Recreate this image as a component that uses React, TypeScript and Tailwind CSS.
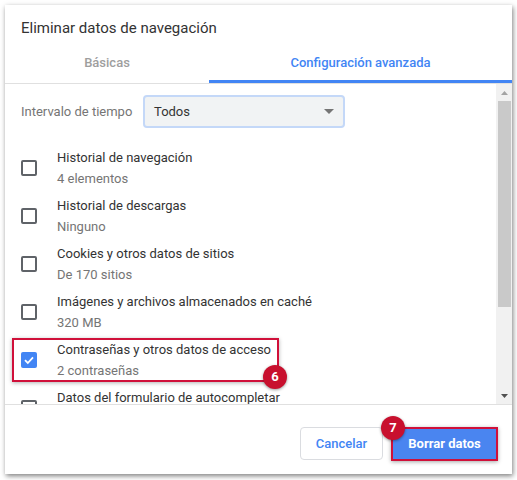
import React from "react";

const items = [
  { t: "Historial de navegación", s: "4 elementos", c: false },
  { t: "Historial de descargas", s: "Ninguno", c: false },
  { t: "Cookies y otros datos de sitios", s: "De 170 sitios", c: false },
  { t: "Imágenes y archivos almacenados en caché", s: "320 MB", c: false },
  { t: "Contraseñas y otros datos de acceso", s: "2 contraseñas", c: true },
  { t: "Datos del formulario de autocompletar", s: "", c: false },
];

function Box({ checked }: { checked: boolean }) {
  if (checked)
    return (
      <div className="w-4 h-4 rounded-[2px] bg-[#4285f4] flex items-center justify-center shrink-0">
        <svg width="12" height="12" viewBox="0 0 12 12">
          <path d="M2 6.2 L4.8 9 L10 3.4" stroke="white" strokeWidth="1.8" fill="none" />
        </svg>
      </div>
    );
  return <div className="w-4 h-4 rounded-[2px] border-2 border-[#5f6368] shrink-0" />;
}

function Badge({ n }: { n: string }) {
  return (
    <div className="w-[24px] h-[24px] rounded-full bg-[#c8102e] text-white text-[13px] font-bold flex items-center justify-center shadow-[0_1px_3px_rgba(0,0,0,0.4)]">
      {n}
    </div>
  );
}

export default function App() {
  return (
    <div className="w-[517px] h-[480px] bg-white pt-[5px] pl-[5px]" style={{ fontFamily: "Roboto, 'Liberation Sans', sans-serif" }}>
      <div className="w-[507px] h-[469px] bg-white shadow-[1px_2px_5px_rgba(0,0,0,0.5)] flex flex-col">
        <div className="h-[40px] shrink-0 pl-[16px] pt-[13px] text-[15px] text-[#333] leading-[20px]">Eliminar datos de navegación</div>
        <div className="flex h-[39px] shrink-0 border-b border-[#e0e0e0]">
          <div className="w-[204px] flex items-center justify-center text-[13px] font-medium text-[#9e9e9e] pb-[2px]">Básicas</div>
          <div className="flex-1 flex items-center justify-center text-[13px] font-medium text-[#4285f4] border-b-[3px] border-[#4285f4] pt-[1px]">Configuración avanzada</div>
        </div>
        <div className="h-[321px] shrink-0 flex border-b border-[#e0e0e0] overflow-hidden">
          <div className="flex-1 flex flex-col pt-[11px] overflow-hidden">
            <div className="flex items-center h-[33px] shrink-0 pl-[16px]">
              <div className="w-[122px] text-[13px] text-[#757575]">Intervalo de tiempo</div>
              <div className="w-[202px] h-[33px] rounded-[4px] border-2 border-[#c4d8f8] bg-[#f1f3f4] flex items-center justify-between pl-[9px] pr-[9px]">
                <span className="text-[13px] text-[#333]">Todos</span>
                <svg width="10" height="5" viewBox="0 0 10 5"><path d="M0 0 L10 0 L5 5 Z" fill="#757575" /></svg>
              </div>
            </div>
            <div className="h-[16px] shrink-0" />
            {items.map((it, i) => (
              <div key={i} className="relative h-[48px] shrink-0 flex items-center pl-[16px]">
                <Box checked={it.c} />
                <div className="pl-[20px] flex flex-col">
                  <div className="text-[13px] text-[#333] leading-[20px]">{it.t}</div>
                  {it.s ? (
                    <div className="text-[13px] text-[#757575] leading-[21px]">{it.s}</div>
                  ) : (
                    <div className="h-[21px]" />
                  )}
                </div>
                {i === 4 && (
                  <>
                    <div className="absolute left-[7px] top-[2px] w-[267px] h-[44px] border-2 border-[#d0103a] shadow-[0_1px_4px_rgba(0,0,0,0.3)]" />
                    <div className="absolute left-[258px] top-[29px]"><Badge n="6" /></div>
                  </>
                )}
              </div>
            ))}
          </div>
          <div className="w-[16px] bg-[#f1f1f1] flex flex-col items-center">
            <div className="h-[17px] shrink-0 flex items-center justify-center">
              <svg width="7" height="4" viewBox="0 0 7 4"><path d="M0 4 L7 4 L3.5 0 Z" fill="#a3a3a3" /></svg>
            </div>
            <div className="w-[13px] h-[206px] shrink-0 bg-[#c9c9c9]" />
            <div className="flex-1" />
            <div className="h-[17px] shrink-0 flex items-center justify-center">
              <svg width="7" height="4" viewBox="0 0 7 4"><path d="M0 0 L7 0 L3.5 4 Z" fill="#505050" /></svg>
            </div>
          </div>
        </div>
        <div className="flex-1 flex justify-end items-start pt-[22px] pr-[14px] gap-[8px]">
          <div className="w-[83px] h-[33px] rounded-[4px] border border-[#dadce0] flex items-center justify-center text-[13px] font-medium text-[#4285f4]">Cancelar</div>
          <div className="relative">
            <div className="w-[107px] h-[34px] border-2 border-[#d0103a] bg-[#4a85f0] flex items-center justify-center text-[13px] font-bold text-white shadow-[0_1px_4px_rgba(0,0,0,0.35)]">Borrar datos</div>
            <div className="absolute left-[-10px] top-[-11px]"><Badge n="7" /></div>
          </div>
        </div>
      </div>
    </div>
  );
}
